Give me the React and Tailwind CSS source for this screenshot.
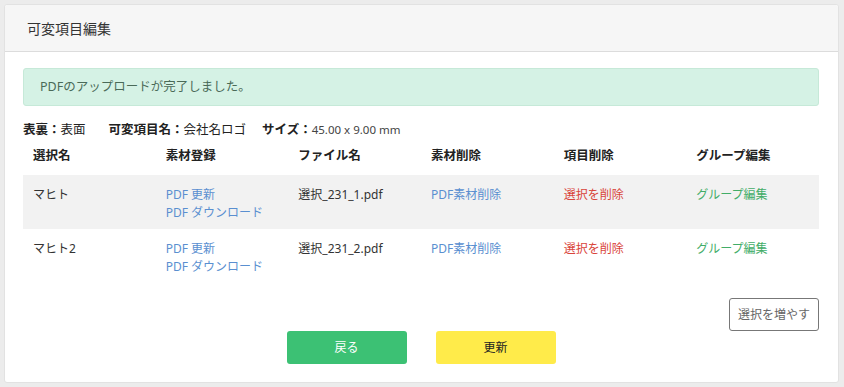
export default function App() {
  const rows = [
    { name: "マヒト", file: "選択_231_1.pdf" },
    { name: "マヒト2", file: "選択_231_2.pdf" },
  ];
  const font = { fontFamily: '"Noto Sans", "Noto Sans CJK JP", sans-serif' };
  return (
    <div className="w-[844px] h-[387px] bg-[#ececec] p-[4px] pr-[5px] pb-[4px]" style={font}>
      <div className="h-[379px] bg-white border border-[#e2e2e2] rounded-[3px] flex flex-col">
        <div className="h-[47px] bg-[#f6f6f6] border-b border-[#dcdcdc] flex items-center pl-[22px] text-[14px] text-[#333] rounded-t-[3px]">
          可変項目編集
        </div>
        <div className="pl-[18px] pr-[19px] pt-[16px] flex flex-col">
          <div className="h-[38px] bg-[#d5f2e5] border border-[#c6e9d8] rounded-[3px] flex items-center pl-[16px] text-[12.5px] text-[#4a6a58]">
            PDFのアップロードが完了しました。
          </div>
          <div className="h-[34px] mt-[7px] flex items-center text-[12.5px] text-[#222]">
            <span className="font-bold">表裏：</span>
            <span>表面</span>
            <span className="font-bold ml-[23px]">可変項目名：</span>
            <span>会社名ロゴ</span>
            <span className="font-bold ml-[16px]">サイズ：</span>
            <span className="text-[11.5px] text-[#444]">45.00 x 9.00 mm</span>
          </div>
          <div className="grid grid-cols-6 h-[28px] text-[12.5px] leading-[18px] font-bold text-[#222]">
            {["選択名", "素材登録", "ファイル名", "素材削除", "項目削除", "グループ編集"].map((h) => (
              <div key={h} className="pl-[10px]">{h}</div>
            ))}
          </div>
          {rows.map((r, i) => (
            <div
              key={r.name}
              className={`grid grid-cols-6 h-[54px] pt-[11px] text-[12px] leading-[18px] ${i === 0 ? "bg-[#f2f2f2]" : "bg-white"}`}
            >
              <div className="pl-[10px] text-[#333]">{r.name}</div>
              <div className="pl-[10px] text-[#5a8fd0] flex flex-col">
                <span>PDF 更新</span>
                <span>PDF ダウンロード</span>
              </div>
              <div className="pl-[10px] text-[#333]">{r.file}</div>
              <div className="pl-[10px] text-[#5a8fd0]">PDF素材削除</div>
              <div className="pl-[10px] text-[#d9443a]">選択を削除</div>
              <div className="pl-[10px] text-[#42ad68]">グループ編集</div>
            </div>
          ))}
          <div className="flex justify-end mt-[15px]">
            <button className="w-[90px] h-[33px] border border-[#777] rounded-[3px] bg-white text-[12px] text-[#666]">
              選択を増やす
            </button>
          </div>
          <div className="flex justify-center gap-[29px]">
            <button className="w-[120px] h-[33px] rounded-[3px] bg-[#3cc174] text-white text-[12px]">戻る</button>
            <button className="w-[120px] h-[33px] rounded-[3px] bg-[#ffeb4a] text-[#222] text-[12px]">更新</button>
          </div>
        </div>
      </div>
    </div>
  );
}
